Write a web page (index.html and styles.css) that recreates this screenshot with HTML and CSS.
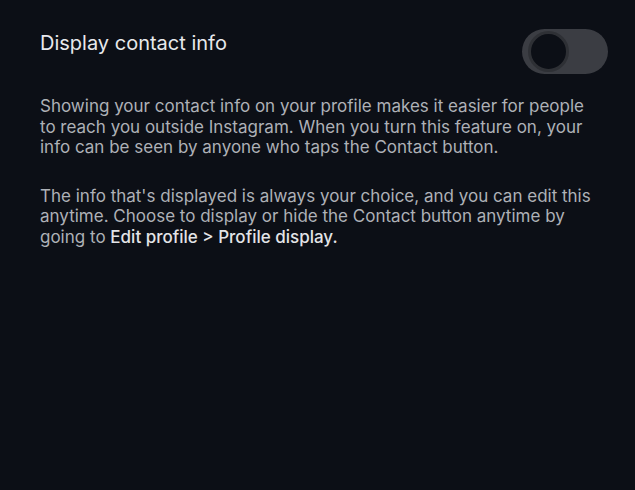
FILE: index.html
```html
<!DOCTYPE html>
<html lang="en">
<head>
    <meta charset="UTF-8">
    <meta name="viewport" content="width=device-width, initial-scale=1.0">
    <title>Display contact info</title>
    <link rel="stylesheet" href="styles.css">
</head>
<body>
    <div class="page">
        <!-- header row -->
        <div class="row">
            <div class="title">Display contact info</div>
            <div class="toggle">
                <div class="knob"></div>
            </div>
        </div>

        <p class="desc">Showing your contact info on your profile makes it easier for people to reach you outside Instagram. When you turn this feature on, your info can be seen by anyone who taps the Contact button.</p>
        <p class="desc">The info that's displayed is always your choice, and you can edit this anytime. Choose to display or hide the Contact button anytime by going to <b>Edit profile &gt; Profile display.</b></p>
    </div>
</body>
</html>
```

FILE: styles.css
```css
html, body {
    margin: 0;
    height: 100%;
    background-color: #0c0f16;
}
.page {
    padding: 29px 27px 0 40px;
    font-family: Inter, "Noto Sans", sans-serif;
}
.row {
    display: flex;
    justify-content: space-between;
    align-items: center;
    margin-bottom: 22px;
}
.title {
    font-size: 20px;
    color: #e8e9ec;
    margin-top: -17px;
}
.toggle {
    width: 86px;
    height: 45px;
    border-radius: 23px;
    background-color: #3b3d43;
    display: flex;
    align-items: center;
    padding-left: 6px;
    box-sizing: border-box;
}
.knob {
    width: 35px;
    height: 35px;
    border-radius: 50%;
    background-color: #0c0f16;
    border: 3px solid #2e3035;
}
.desc {
    max-width: 558px;
    margin: 0 0 28px;
    font-size: 17px;
    line-height: 20.5px;
    color: #aeb1b7;
}
.desc b {
    font-weight: 500;
    color: #e3e4e7;
}
```
